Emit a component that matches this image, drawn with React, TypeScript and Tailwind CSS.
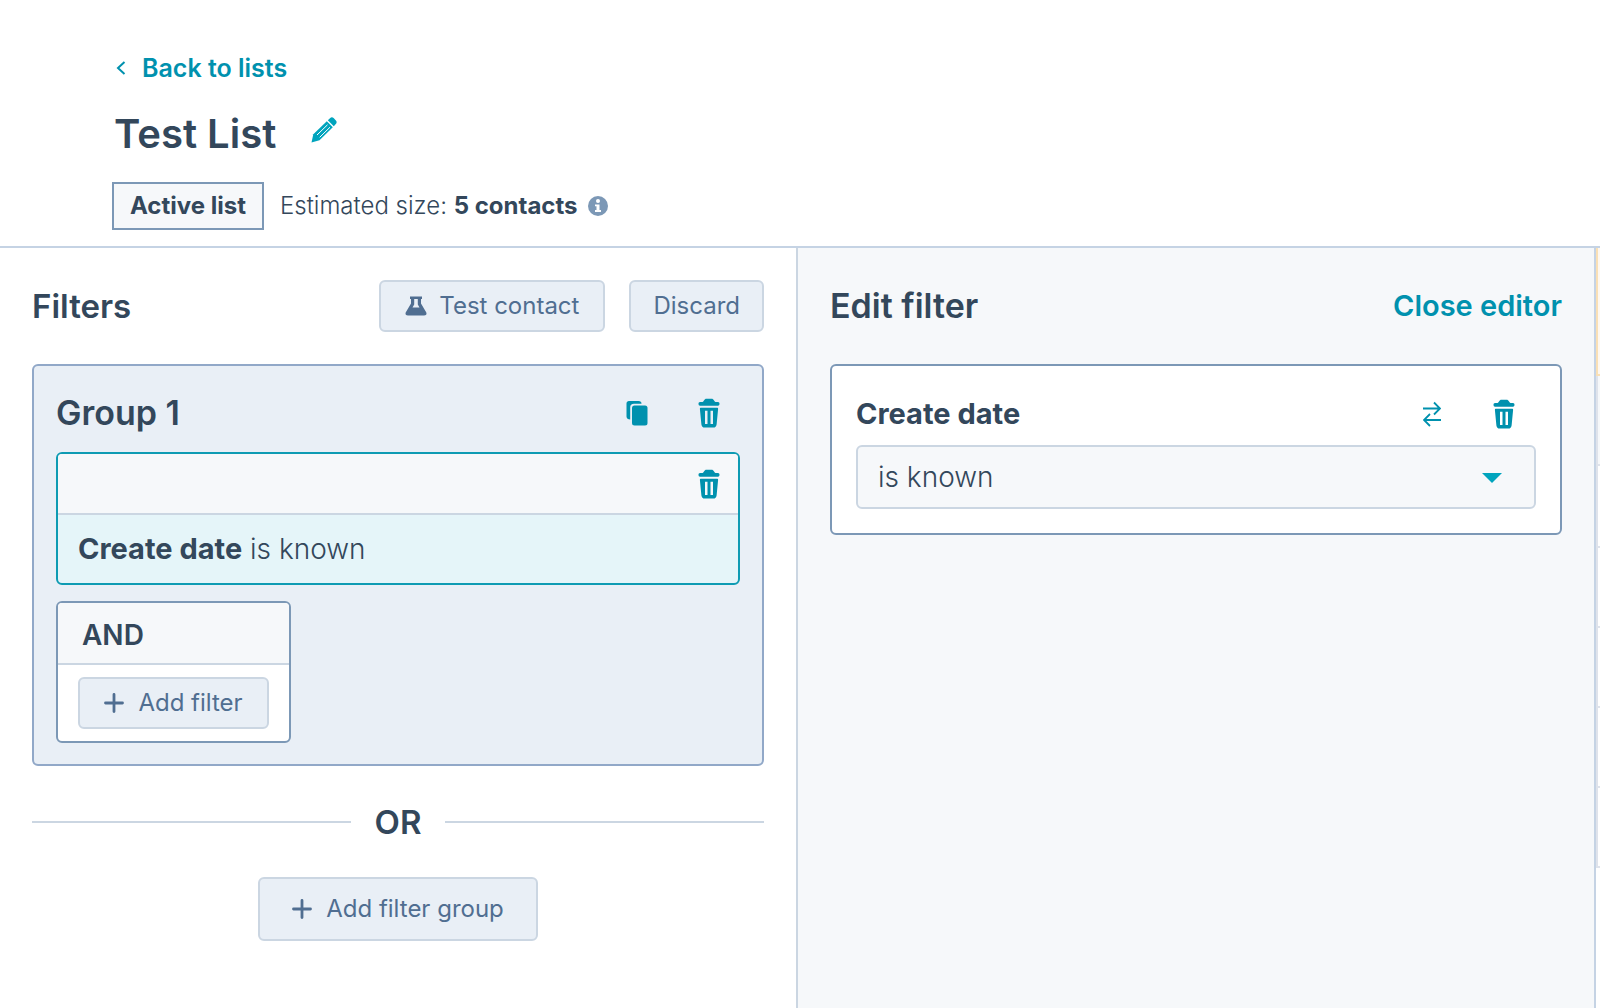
import type { ReactNode } from "react";

interface IconButtonProps {
  label: string;
  children: ReactNode;
}

const IconButton = ({ label, children }: IconButtonProps) => {
  return (
    <button
      type="button"
      aria-label={label}
      className="flex size-8 items-center justify-center text-[#0091ae]"
    >
      {children}
    </button>
  );
};

const TrashIcon = () => {
  return (
    <svg width="22" height="30" viewBox="0 0 22 30" fill="currentColor">
      <path d="M2 4H4.500C6 3.600 6 .8 8.500 .8H13.500C16 .8 16 3.600 17.500 4H20C21 4 21.500 5 21.500 5.800S21 7.800 20 7.800H2C1 7.800.5 6.800.5 5.800S1 4 2 4Z" />
      <path
        fillRule="evenodd"
        d="M3 9.800H19C19.800 9.800 20.200 10.200 20.100 11L18.600 26.500C18.300 28.600 17.300 29.600 15.300 29.600H6.700C4.700 29.600 3.700 28.600 3.400 26.500L1.900 11C1.800 10.200 2.200 9.800 3 9.800ZM7 12.700V26H9.500V12.700ZM12.500 12.700V26H15V12.700Z"
      />
    </svg>
  );
};

const CopyIcon = () => {
  return (
    <svg width="22" height="26" viewBox="0 0 22 26" fill="currentColor">
      <path d="M3 1H12.500C14.500 1 15.500 2 15.500 3.800H8C5.500 3.800 4.200 5 4.200 7.500V19.500C2 19.500.5 18.500.5 16.500V3.500C.5 2 1.500 1 3 1Z" />
      <rect x="6" y="5.500" width="15.500" height="20" rx="2.500" />
    </svg>
  );
};

const PlusIcon = () => {
  return (
    <svg
      width="20"
      height="20"
      viewBox="0 0 20 20"
      stroke="currentColor"
      strokeWidth="2.800"
      strokeLinecap="round"
    >
      <path d="M10 1.500V18.500M1.500 10H18.500" />
    </svg>
  );
};

const Header = () => {
  return (
    <header className="border-b-2 border-[#c5d3e4] px-28 pt-12 pb-4">
      <a
        href="#lists"
        className="flex items-center gap-4 pl-1 text-[25px] leading-10 font-semibold text-[#0091ae]"
      >
        <svg
          width="10"
          height="14"
          viewBox="0 0 10 14"
          fill="none"
          stroke="currentColor"
          strokeWidth="2"
        >
          <path d="M8.500 1L2 7L8.500 13" />
        </svg>
        Back to lists
      </a>
      <div className="mt-[18px] flex items-start gap-8 pl-0.5">
        <h1 className="text-[40px] leading-14 font-semibold">Test List</h1>
        <div className="pt-2">
          <IconButton label="Edit list name">
            <svg width="26" height="26" viewBox="0 0 26 26" fill="#00a4bd">
              <path d="M16.800 3.200L19 1.200C20.200 .1 21.500 .1 22.600 1.100L24.900 3.400C25.900 4.500 25.900 5.800 24.800 7L22.800 9.200Z" />
              <path d="M15.800 4.200L21.800 10.200L8.500 23.300L.5 25.500L2.300 17.300Z" />
              <path
                d="M6 18L16.500 7.800M8.700 20.300L19 10.200"
                stroke="#fff"
                strokeWidth="1"
              />
            </svg>
          </IconButton>
        </div>
      </div>
      <div className="mt-5 flex items-center text-[24px] leading-11">
        <span className="border-2 border-[#7c98b6] bg-[#f6f8fa] px-4 font-bold">
          Active list
        </span>
        <p className="ml-4 font-light">
          Estimated size: <strong className="font-bold">5 contacts</strong>
        </p>
        <svg width="20" height="20" viewBox="0 0 20 20" className="ml-2.5">
          <circle cx="10" cy="10" r="10" fill="#7c98b6" />
          <circle cx="10" cy="5" r="2" fill="#fff" />
          <path d="M7 8.500H11.500V14H13V16H7V14H8.500V10.300H7Z" fill="#fff" />
        </svg>
      </div>
    </header>
  );
};

const FilterGroup = () => {
  return (
    <section className="mt-8 rounded-md border-2 border-[#91a8c8] bg-[#e9eff6] px-[22px] pt-[27px] pb-[21px]">
      <div className="flex items-center justify-between pr-[15px]">
        <h3 className="text-[34px] leading-10 font-semibold">Group 1</h3>
        <div className="flex items-center gap-10">
          <IconButton label="Clone group">
            <CopyIcon />
          </IconButton>
          <IconButton label="Delete group">
            <TrashIcon />
          </IconButton>
        </div>
      </div>

      <div className="mt-[19px] overflow-hidden rounded-md border-2 border-[#0e9bb3] bg-[#e5f5f9]">
        <div className="flex h-[61px] items-center justify-end border-b-2 border-[#cbd6e2] bg-[#f6f8fa] pr-[13px]">
          <IconButton label="Delete filter">
            <TrashIcon />
          </IconButton>
        </div>
        <p className="px-5 text-[28px] leading-[68px] font-light">
          <strong className="text-[29px] font-bold">Create date</strong> is known
        </p>
      </div>

      <div className="mt-4 w-[235px] overflow-hidden rounded-md border-2 border-[#7c98b6] bg-white">
        <p className="border-b-2 border-[#cbd6e2] bg-[#f6f8fa] px-6 pt-1 text-[28px] leading-14 font-semibold">
          AND
        </p>
        <div className="px-5 py-3">
          <button
            type="button"
            className="flex h-[52px] w-full items-center justify-center gap-3.5 rounded-md border-2 border-[#cbd6e2] bg-[#e9eff6] text-[24px] text-[#506e91]"
          >
            <PlusIcon />
            Add filter
          </button>
        </div>
      </div>
    </section>
  );
};

const FiltersPanel = () => {
  return (
    <section className="flex-1 border-r-2 border-[#cbd6e2] px-8 pt-8">
      <div className="flex items-center justify-between">
        <h2 className="text-[33px] leading-10 font-semibold">Filters</h2>
        <div className="flex gap-6 text-[24px] text-[#506e91]">
          <button
            type="button"
            className="flex h-[52px] items-center gap-3 rounded-md border-2 border-[#cbd6e2] bg-[#e9eff6] px-6"
          >
            <svg width="22" height="20" viewBox="0 0 22 20" fill="currentColor">
              <path
                fillRule="evenodd"
                d="M5 .5H17V3H16V7.500L21.300 16.500C22 18.500 21 19.500 19 19.500H3C1 19.500 0 18.500.7 16.500L6 7.500V3H5ZM9.200 3V8.500L7.500 11.500H14.500L12.800 8.500V3Z"
              />
            </svg>
            Test contact
          </button>
          <button
            type="button"
            className="h-[52px] rounded-md border-2 border-[#cbd6e2] bg-[#e9eff6] px-[22px]"
          >
            Discard
          </button>
        </div>
      </div>

      <FilterGroup />

      <div className="mt-9 flex items-center gap-6 text-[33px] leading-10 font-semibold">
        <hr className="flex-1 border-t-2 border-[#cbd6e2]" />
        OR
        <hr className="flex-1 border-t-2 border-[#cbd6e2]" />
      </div>

      <button
        type="button"
        className="mx-auto mt-[35px] flex h-16 items-center gap-3.5 rounded-md border-2 border-[#cbd6e2] bg-[#e9eff6] px-8 text-[24px] text-[#506e91]"
      >
        <PlusIcon />
        Add filter group
      </button>
    </section>
  );
};

const EditorPanel = () => {
  return (
    <section className="flex-1 bg-[#f6f8fa] px-8 pt-8">
      <div className="flex h-[52px] items-center justify-between">
        <h2 className="text-[34px] leading-10 font-semibold">Edit filter</h2>
        <button type="button" className="text-[29px] font-semibold text-[#0091ae]">
          Close editor
        </button>
      </div>

      <div className="mt-8 rounded-md border-2 border-[#7c98b6] bg-white px-6 pt-7 pb-6">
        <div className="flex items-center justify-between pr-4">
          <label htmlFor="operator" className="text-[29px] leading-10 font-bold">
            Create date
          </label>
          <div className="flex items-center gap-10">
            <IconButton label="Replace filter">
              <svg
                width="18"
                height="26"
                viewBox="0 0 18 26"
                fill="none"
                stroke="currentColor"
                strokeWidth="1.800"
              >
                <path d="M0 7.500H17M11 1.500L17 7.500L11 13.500M18 19H1M7 13L1 19L7 25" />
              </svg>
            </IconButton>
            <IconButton label="Delete filter">
              <TrashIcon />
            </IconButton>
          </div>
        </div>
        <div className="relative mt-[11px]">
          <select
            id="operator"
            className="h-16 w-full appearance-none rounded-md border-2 border-[#cbd6e2] bg-[#f6f8fa] px-5 text-[28px] font-light"
          >
            <option>is known</option>
            <option>is unknown</option>
          </select>
          <svg
            width="20"
            height="10"
            viewBox="0 0 20 10"
            fill="#00a4bd"
            className="pointer-events-none absolute top-7 right-[34px]"
          >
            <path d="M0 0H20L10 10Z" />
          </svg>
        </div>
      </div>
    </section>
  );
};

// left edge of the contacts table sitting behind the editor
const TableEdge = () => {
  return (
    <div className="w-[6px] border-l-2 border-[#c5d3e4]">
      <div className="h-32 border-b-2 border-l-2 border-[#fae0b5] bg-[#fef8f0]" />
      <div className="h-[90px] border-b-2 border-l-2 border-[#dfe3eb] bg-[#f6f8fa]" />
      <div className="h-[82px] border-b-2 border-l-2 border-[#dfe3eb]" />
      <div className="h-20 border-b-2 border-l-2 border-[#dfe3eb]" />
      <div className="h-20 border-b-2 border-l-2 border-[#dfe3eb]" />
      <div className="h-20 border-b-2 border-l-2 border-[#dfe3eb]" />
      <div className="h-20 border-b-2 border-l-2 border-[#dfe3eb]" />
    </div>
  );
};

const App = () => {
  return (
    <div className="flex min-h-screen flex-col bg-white font-['Inter',sans-serif] text-[#33475b]">
      <Header />
      <main className="flex flex-1">
        <FiltersPanel />
        <EditorPanel />
        <TableEdge />
      </main>
    </div>
  );
};

export default App;
